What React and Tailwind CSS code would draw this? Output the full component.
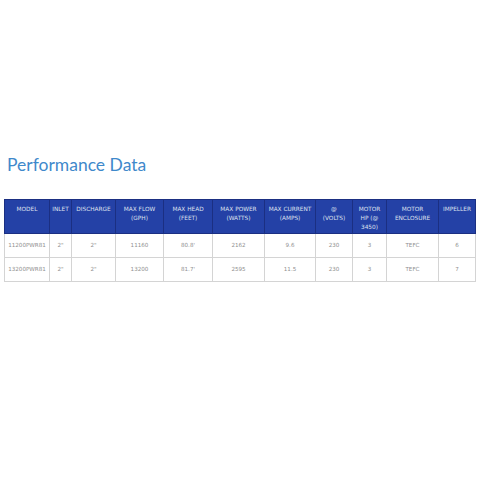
import React from "react";

const cols = [
  { w: 45, h: ["MODEL"] },
  { w: 22, h: ["INLET"] },
  { w: 44, h: ["DISCHARGE"] },
  { w: 48, h: ["MAX FLOW", "(GPH)"] },
  { w: 49, h: ["MAX HEAD", "(FEET)"] },
  { w: 52, h: ["MAX POWER", "(WATTS)"] },
  { w: 51, h: ["MAX CURRENT", "(AMPS)"] },
  { w: 37, h: ["@", "(VOLTS)"] },
  { w: 34, h: ["MOTOR", "HP (@", "3450)"] },
  { w: 52, h: ["MOTOR", "ENCLOSURE"] },
  { w: 37, h: ["IMPELLER"] },
];

const rows = [
  ["11200PWR81", "2\"", "2\"", "11160", "80.8'", "2162", "9.6", "230", "3", "TEFC", "6"],
  ["13200PWR81", "2\"", "2\"", "13200", "81.7'", "2595", "11.5", "230", "3", "TEFC", "7"],
];

export default function App() {
  return (
    <div className="w-[480px] h-[480px] bg-white overflow-hidden">
      <div className="pt-[153px] pl-[7px] h-[199px]">
        <h1
          className="text-[17.5px] leading-[24px] text-[#3f89cb] font-normal"
          style={{ fontFamily: 'Lato, sans-serif' }}
        >
          Performance Data
        </h1>
      </div>
      <div className="pl-[4px]">
        <table
          className="border-collapse table-fixed w-[471px]"
          style={{ fontFamily: '"DejaVu Sans", Verdana, sans-serif' }}
        >
          <colgroup>
            {cols.map((c, i) => (
              <col key={i} style={{ width: c.w }} />
            ))}
          </colgroup>
          <thead>
            <tr className="h-[34px]">
              {cols.map((c, i) => (
                <th
                  key={i}
                  className="bg-[#2441a6] border border-[#1b2f82] align-top pt-[5px] px-0 text-[5.8px] leading-[9px] font-normal text-[#dde0ee] text-center"
                >
                  {c.h.map((l, j) => (
                    <div key={j}>{l}</div>
                  ))}
                </th>
              ))}
            </tr>
          </thead>
          <tbody>
            {rows.map((r, ri) => (
              <tr key={ri} className="h-[24px]">
                {r.map((v, i) => (
                  <td
                    key={i}
                    className="border border-[#d4d4d4] text-center align-middle text-[5.6px] text-[#8f8f8f] p-0"
                  >
                    {v}
                  </td>
                ))}
              </tr>
            ))}
          </tbody>
        </table>
      </div>
    </div>
  );
}
